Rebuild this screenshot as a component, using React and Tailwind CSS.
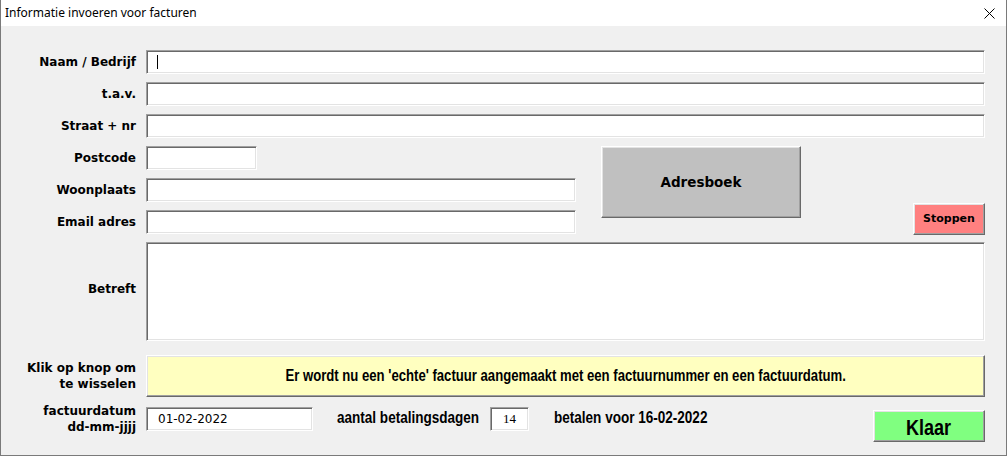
import React from "react";

const sunken =
  "bg-white border-t border-l border-[#a0a0a0] border-b border-r border-b-white border-r-white shadow-[inset_1px_1px_0_#696969,inset_-1px_-1px_0_#e3e3e3]";
const raised =
  "border-t border-l border-white border-b border-r border-b-[#696969] border-r-[#696969] shadow-[inset_-1px_-1px_0_#a0a0a0,inset_1px_1px_0_#e3e3e3]";

const labelFont = { fontFamily: "Tahoma, 'DejaVu Sans', Verdana, sans-serif" };
const arial = { fontFamily: "'Liberation Sans', Arial, sans-serif" };

// condensed bold text: Arial Narrow is not installed, so squeeze Liberation Sans
const Narrow = ({ children, className = "", origin = "origin-left" }) => (
  <span className={`inline-block whitespace-nowrap font-bold scale-x-[0.82] ${origin} ${className}`} style={arial}>
    {children}
  </span>
);

const Label = ({ children, className = "" }) => (
  <div
    className={`w-[135px] shrink-0 text-right font-bold text-[12px] leading-[16px] text-black ${className}`}
    style={labelFont}
  >
    {children}
  </div>
);

const Field = ({ label, width = "flex-1", children }) => (
  <div className="flex items-center h-[24px] gap-[10px]">
    <Label>{label}</Label>
    <div className={`${sunken} h-[24px] ${width} flex items-center`}>{children}</div>
  </div>
);

export default function App() {
  return (
    <div className="w-[1007px] h-[456px] flex flex-col bg-[#f0f0f0] border-l border-r border-b border-[#7a7a7a] overflow-hidden">
      {/* title bar */}
      <div className="h-[26px] bg-white flex items-center justify-between pl-[4px] pr-[11px] shrink-0">
        <span className="text-[12px] text-black" style={{ fontFamily: "'Noto Sans', 'Open Sans', sans-serif" }}>
          Informatie invoeren voor facturen
        </span>
        <svg width="11" height="11" viewBox="0 0 11 11" className="text-black">
          <path d="M0.5 0.5 L10.5 10.5 M10.5 0.5 L0.5 10.5" stroke="currentColor" strokeWidth="1" />
        </svg>
      </div>

      <div className="flex flex-col pt-[24px] pr-[21px]">
        <div className="flex flex-col gap-[8px]">
          <Field label="Naam / Bedrijf">
            <span className="ml-[10px] w-px h-[14px] bg-black" />
          </Field>
          <Field label="t.a.v." />
          <Field label="Straat + nr" />

          <div className="flex">
            <div className="flex flex-col gap-[8px] w-[575px] shrink-0">
              <Field label="Postcode" width="w-[111px]" />
              <Field label="Woonplaats" />
              <Field label="Email adres" />
            </div>
            <button
              className={`${raised} ml-[25px] w-[200px] h-[72px] bg-[#c0c0c0] font-bold text-[13.5px] text-black self-start`}
              style={labelFont}
            >
              Adresboek
            </button>
            <div className="flex-1 flex justify-end items-end">
              <button
                className={`${raised} w-[72px] h-[32px] mb-[-1px] bg-[#ff8080] font-bold text-[11px] text-black`}
                style={labelFont}
              >
                Stoppen
              </button>
            </div>
          </div>

          <div className="flex items-center gap-[10px] h-[99px]">
            <Label className="mt-[-5px]">Betreft</Label>
            <div className={`${sunken} flex-1 h-full`} />
          </div>
        </div>

        <div className="flex items-center gap-[10px] mt-[14px] h-[42px]">
          <Label className="leading-[15px]">
            Klik op knop om
            <br />
            te wisselen
          </Label>
          <div className={`${raised} flex-1 h-full bg-[#ffffc0] flex items-center justify-center text-black`}>
            <Narrow origin="origin-center" className="text-[16px]">
              Er wordt nu een 'echte' factuur aangemaakt met een factuurnummer en een factuurdatum.
            </Narrow>
          </div>
        </div>

        <div className="flex items-start mt-[10px]">
          <Label className="leading-[16px] mt-[-4px]">
            factuurdatum
            <br />
            dd-mm-jjjj
          </Label>
          <div
            className={`${sunken} ml-[10px] w-[167px] h-[24px] flex items-center pl-[11px] text-[12px] text-black`}
            style={labelFont}
          >
            01-02-2022
          </div>
          <div className="ml-[24px] w-[153px] text-black leading-[20px]">
            <Narrow className="text-[16.5px]">aantal betalingsdagen</Narrow>
          </div>
          <div
            className={`${sunken} w-[39px] h-[24px] flex items-center justify-center text-[13px] text-black`}
            style={{ fontFamily: "'Liberation Serif', serif" }}
          >
            14
          </div>
          <div className="ml-[25px] text-black leading-[20px]">
            <Narrow className="text-[16.5px]">betalen voor 16-02-2022</Narrow>
          </div>
          <div className="flex-1 flex justify-end">
            <button className={`${raised} mt-[3px] w-[112px] h-[32px] bg-[#80ff80] text-black`}>
              <Narrow origin="origin-center" className="text-[22px]">
                Klaar
              </Narrow>
            </button>
          </div>
        </div>
      </div>
    </div>
  );
}
